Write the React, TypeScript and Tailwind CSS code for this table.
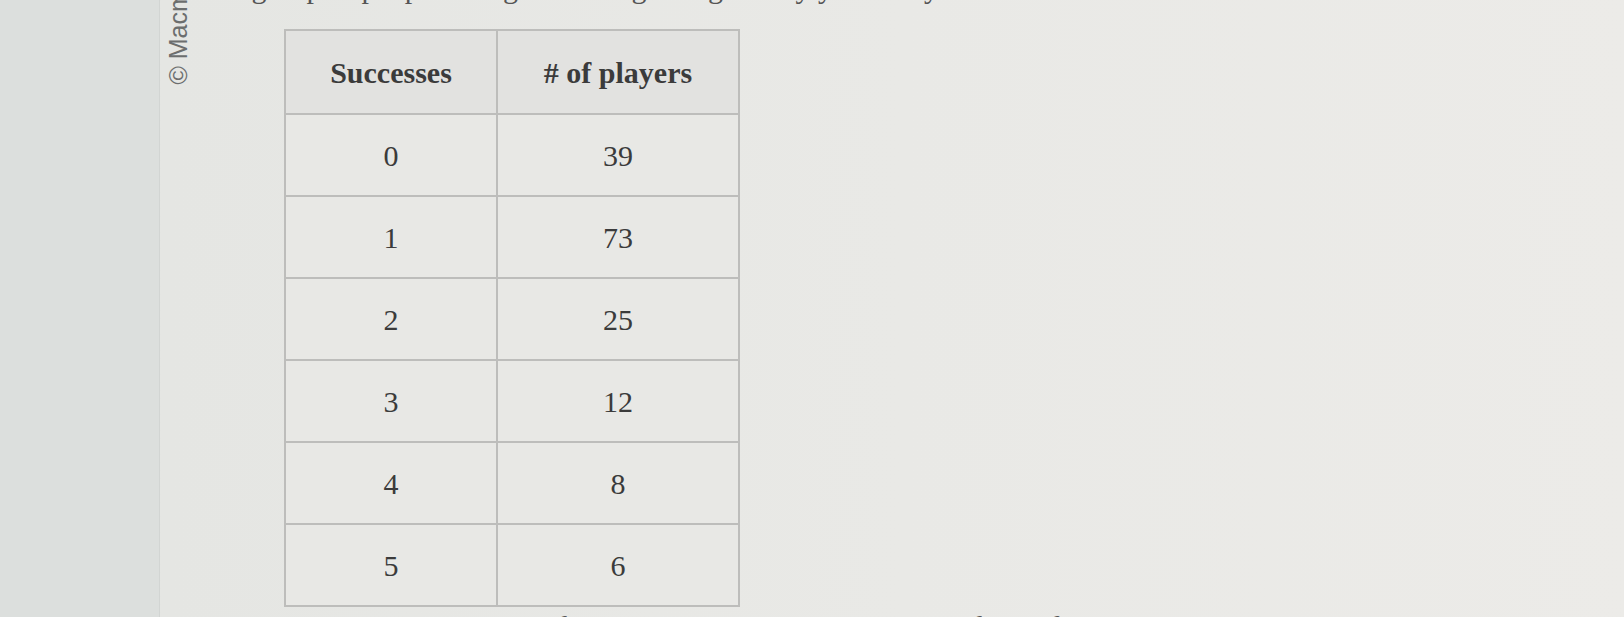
import React from 'react';

const rows = [
  ['0', '39'],
  ['1', '73'],
  ['2', '25'],
  ['3', '12'],
  ['4', '8'],
  ['5', '6'],
];

const App = () => {
  return (
    <div className="w-[1624px] h-[617px] flex overflow-hidden bg-[#e7e8e5]" style={{ fontFamily: '"Liberation Serif", serif' }}>
      {/* Left margin of the page */}
      <div className="w-[160px] h-full bg-[#dcdfdd] border-r border-[#d2d5d3]" />

      {/* Page */}
      <div className="relative flex-1 h-full bg-linear-to-r from-[#e5e6e3] via-[#e9e9e6] to-[#ecebe8]">
        {/* Rotated copyright */}
        <div className="absolute left-[4px] top-[-162px] w-[28px] h-[250px] flex items-center justify-center">
          <span
            className="block -rotate-90 whitespace-nowrap text-[25px] text-[#6c6e6e] leading-none"
            style={{ fontFamily: '"Liberation Sans", sans-serif' }}
          >
            © Macmillan Learning
          </span>
        </div>

        {/* Cut-off line above the table */}
        <div className="h-[29px] overflow-hidden relative">
          <p className="absolute left-[64px] top-[-27px] text-[30px] text-[#555] whitespace-nowrap leading-none">
            A group of people was given a ring toss game by your Jolly team
          </p>
        </div>

        <div className="pl-[124px]">
          <table className="border-collapse text-[30px] text-[#3b3b3b] bg-[#e8e8e5]">
            <thead>
              <tr className="h-[84px] bg-[#e2e2e0]">
                <th className="w-[212px] border-2 border-[#bdbdbb] font-bold text-center">Successes</th>
                <th className="w-[242px] border-2 border-[#bdbdbb] font-bold text-center"># of players</th>
              </tr>
            </thead>
            <tbody>
              {rows.map(([s, n]) => (
                <tr key={s} className="h-[82px]">
                  <td className="border-2 border-[#bdbdbb] text-center">{s}</td>
                  <td className="border-2 border-[#bdbdbb] text-center">{n}</td>
                </tr>
              ))}
            </tbody>
          </table>
          <p className="mt-[5px] ml-[10px] text-[30px] text-[#555] whitespace-nowrap leading-none">
            Test whether the data fit the distribution that the teacher found for ten tosses.
          </p>
        </div>
      </div>
    </div>
  );
};

export default App;
